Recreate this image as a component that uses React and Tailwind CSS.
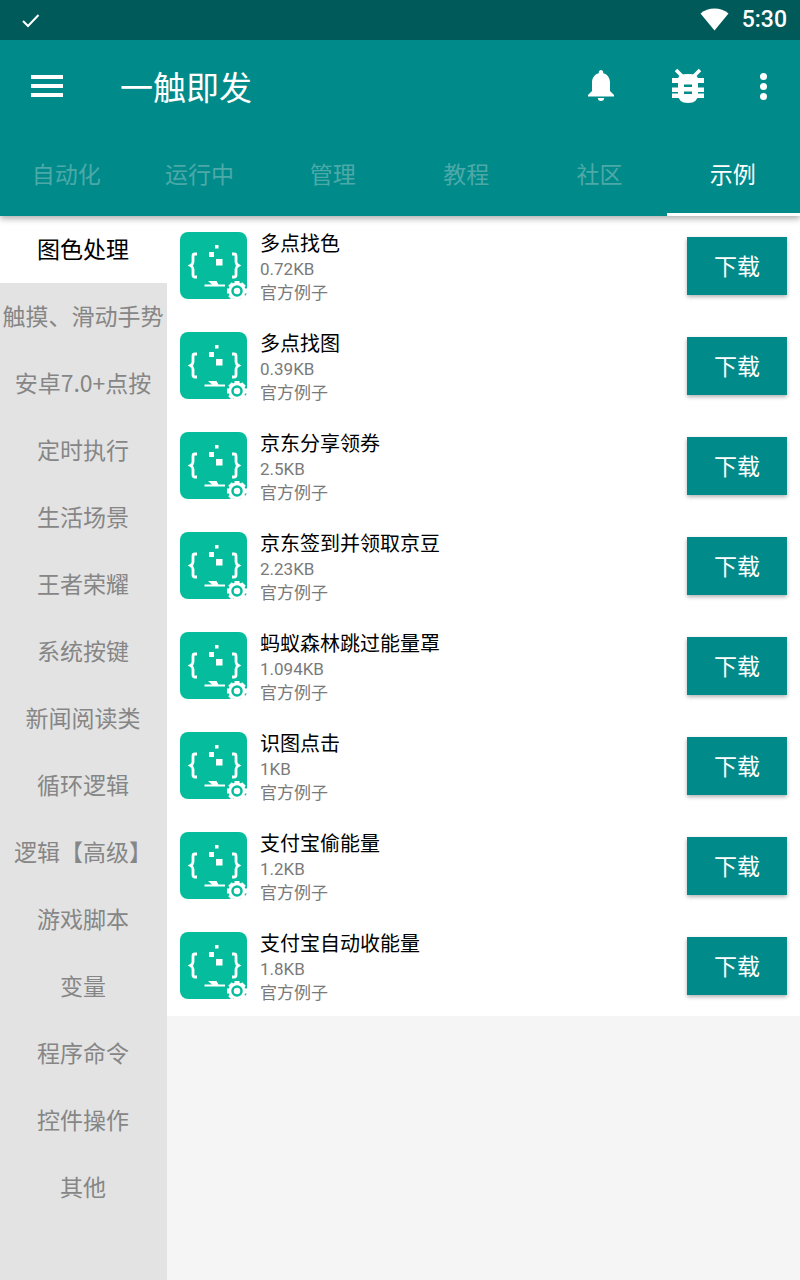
const TABS = ['自动化', '运行中', '管理', '教程', '社区', '示例'];

const CATEGORIES = [
  '图色处理', '触摸、滑动手势', '安卓7.0+点按', '定时执行', '生活场景', '王者荣耀', '系统按键',
  '新闻阅读类', '循环逻辑', '逻辑【高级】', '游戏脚本', '变量', '程序命令', '控件操作', '其他',
];

const SCRIPTS = [
  { name: '多点找色', size: '0.72KB' },
  { name: '多点找图', size: '0.39KB' },
  { name: '京东分享领券', size: '2.5KB' },
  { name: '京东签到并领取京豆', size: '2.23KB' },
  { name: '蚂蚁森林跳过能量罩', size: '1.094KB' },
  { name: '识图点击', size: '1KB' },
  { name: '支付宝偷能量', size: '1.2KB' },
  { name: '支付宝自动收能量', size: '1.8KB' },
];

function ScriptIcon() {
  return (
    <svg width="67" height="67" viewBox="0 0 67 67" className="shrink-0">
      <rect width="67" height="67" rx="8" fill="#05bd9c" />
      <g fill="none" stroke="#fff" strokeWidth="2.8">
        <path d="M17 22h-2q-2 0-2 2v6q0 2-2.500 3.500q2.500 1.500 2.500 3.500v6q0 2 2 2h2" />
        <path d="M52 22h2q2 0 2 2v6q0 2 2.500 3.500q-2.500 1.500-2.500 3.500v6q0 2-2 2h-2" />
      </g>
      <g fill="#fff">
        <rect x="35" y="13" width="3.500" height="3.500" />
        <rect x="29" y="20" width="5" height="5" />
        <rect x="36" y="27" width="6.500" height="6.500" />
        <path d="M28 49h8.500l2 3.500H45v2H24.500v-2H32z" />
      </g>
      <circle cx="57" cy="59" r="8.500" fill="#fff" />
      <g stroke="#fff" strokeWidth="5">
        <path d="M57 49v20M47 59h20M50 52l14 14M64 52l-14 14" />
      </g>
      <circle cx="57" cy="59" r="4.500" fill="#fff" stroke="#05bd9c" strokeWidth="2.500" />
    </svg>
  );
}

function BellIcon() {
  return (
    <svg width="30" height="34" viewBox="0 0 30 34" fill="#fff">
      <path d="M15 1c1.300 0 2.200 1 2.200 2.300v.9c4.500 1 6.800 5 6.800 9.300v8.500l4 4v1.500H2V26l4-4v-8.500c0-4.300 2.300-8.300 6.800-9.300v-.9C12.800 2 13.700 1 15 1z" />
      <path d="M11.800 29h6.400c0 1.800-1.400 3-3.200 3s-3.200-1.200-3.200-3z" />
    </svg>
  );
}

function BugIcon() {
  return (
    <svg width="32" height="36" viewBox="0 0 32 36" fill="#fff">
      <path d="M6 11q0-5 10-5t10 5v15q0 9-10 9T6 26z" />
      <path d="M0 10h32v5H0zM0 19.500h32V24H0zM0 25.500h32V30H0z" />
      <path d="M4 2l6 6M28 2l-6 6" stroke="#fff" strokeWidth="3.500" fill="none" />
      <rect x="12" y="16.500" width="8" height="2.500" fill="#008b8a" />
      <rect x="12" y="23.500" width="8" height="2.500" fill="#008b8a" />
    </svg>
  );
}

function ScriptRow({ item }) {
  return (
    <div className="h-[100px] flex pl-[13px] pr-[13px] pt-[16px]">
      <ScriptIcon />
      <div className="ml-[13px] flex-1 min-w-0 -mt-[4px]">
        <div className="text-[20px] leading-[29px] text-black">{item.name}</div>
        <div className="text-[17px] leading-[23px] mt-[1px] text-[#7a7a7a] font-['Roboto',sans-serif]">{item.size}</div>
        <div className="text-[17px] leading-[23px] -mt-[1px] text-[#7a7a7a]">官方例子</div>
      </div>
      <button className="mt-[5px] w-[100px] h-[58px] pb-[2px] bg-[#008b8a] text-white text-[23px] shadow-[0_2px_4px_rgba(0,0,0,0.3)]">
        下载
      </button>
    </div>
  );
}

export default function App() {
  return (
    <div className="w-[800px] h-[1280px] overflow-hidden flex flex-col bg-[#f5f5f5] font-['Noto_Sans_CJK_SC','Noto_Sans',sans-serif]">
      <div className="relative z-10 bg-[#008b8a] shadow-[0_3px_6px_rgba(0,0,0,0.3)]">
        <div className="h-[40px] bg-[#005a5a] flex items-center pl-[21px] pr-[13px] text-white">
          <svg width="19" height="15" viewBox="0 0 19 15" fill="none" stroke="#fff" strokeWidth="2">
            <path d="M2 8l5 5L17.500 2" />
          </svg>
          <svg width="29" height="23" viewBox="0 0 29 23" fill="#fff" className="ml-auto mr-[13px] mb-[1px]">
            <path d="M14.500 22.500L0.500 5.500C4.500 2.300 9.300.5 14.500.5s10 1.800 14 5z" />
          </svg>
          <span className="text-[23px] font-medium font-['Roboto',sans-serif]">5:30</span>
        </div>
        <div className="h-[96px] flex items-center pl-[31px] pr-[33px] pb-[4px]">
          <div className="w-[32px] flex flex-col gap-[5.500px]">
            <div className="h-[3.500px] bg-white" />
            <div className="h-[3.500px] bg-white" />
            <div className="h-[3.500px] bg-white" />
          </div>
          <h1 className="ml-[57px] text-[33px] text-white leading-none">一触即发</h1>
          <div className="ml-auto flex items-center">
            <BellIcon />
            <div className="ml-[56px]">
              <BugIcon />
            </div>
            <div className="ml-[56px] flex flex-col gap-[3px]">
              <div className="w-[7px] h-[7px] rounded-full bg-white" />
              <div className="w-[7px] h-[7px] rounded-full bg-white" />
              <div className="w-[7px] h-[7px] rounded-full bg-white" />
            </div>
          </div>
        </div>
        <div className="h-[80px] flex">
          {TABS.map((tab, i) => (
            <div
              key={tab}
              className={`flex-1 flex items-center justify-center text-[23px] pb-[3px] pr-[1px] border-b-[3px] ${
                i === 5 ? 'text-white border-white' : 'text-[#4da9a8] border-transparent'
              }`}
            >
              {tab}
            </div>
          ))}
        </div>
      </div>

      <div className="flex-1 flex min-h-0">
        <div className="w-[167px] shrink-0 bg-[#e3e3e3]">
          {CATEGORIES.map((cat, i) => (
            <div
              key={cat}
              className={`h-[67px] flex items-center justify-center whitespace-nowrap text-[23px] pb-[2px] pr-[1px] ${
                i === 0 ? 'bg-white text-black' : 'text-[#868686]'
              }`}
            >
              {cat}
            </div>
          ))}
        </div>
        <div className="flex-1 min-w-0">
          <div className="bg-white">
            {SCRIPTS.map((item) => (
              <ScriptRow key={item.name} item={item} />
            ))}
          </div>
        </div>
      </div>
    </div>
  );
}
